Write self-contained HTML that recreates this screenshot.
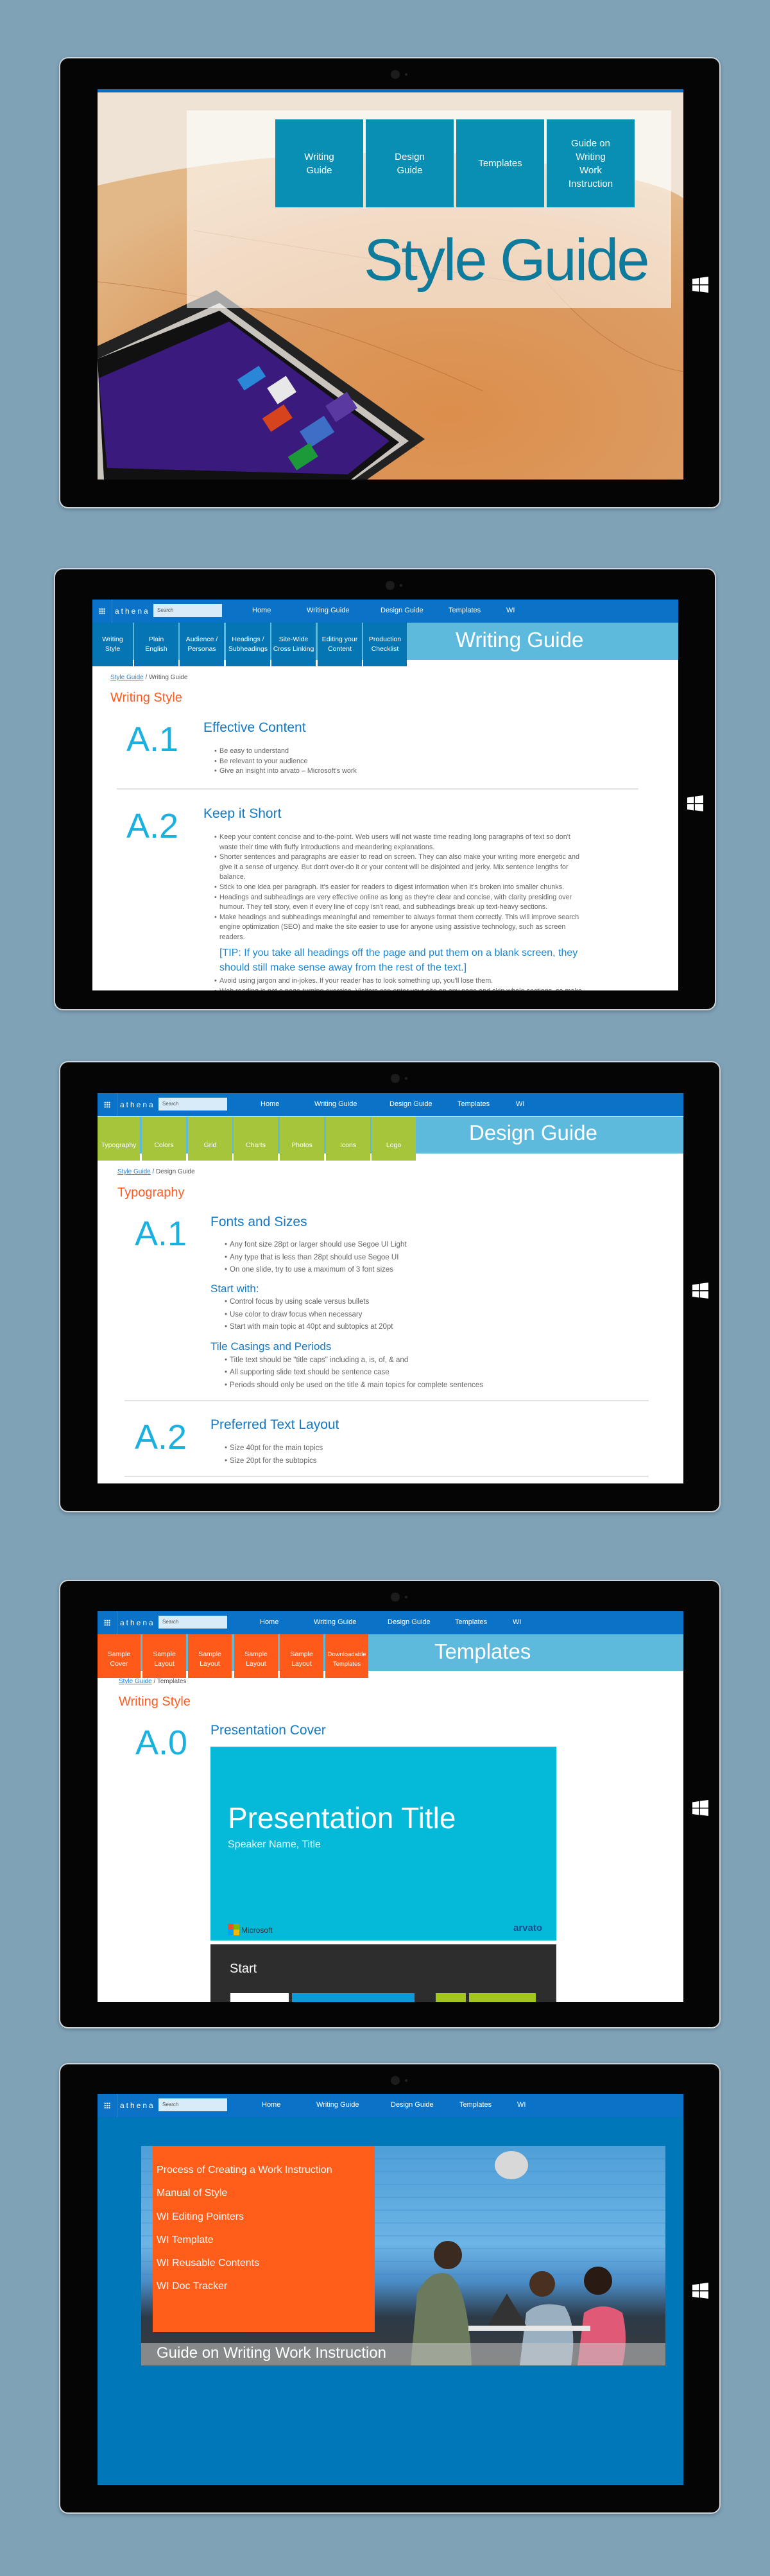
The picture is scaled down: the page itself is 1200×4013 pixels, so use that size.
<!DOCTYPE html>
<html><head><meta charset="utf-8">
<style>
*{margin:0;padding:0;box-sizing:border-box}
body{width:1200px;height:4013px;background:#7fa2b7;position:relative;overflow:hidden;font-family:"Liberation Sans",sans-serif}
.bz{position:absolute;background:#050505;border:2px solid #cfd4d8;border-radius:14px;box-shadow:0 2px 6px rgba(0,0,0,.25)}
.cam{position:absolute;left:515px;top:18px;width:14px;height:14px;border-radius:50%;background:#1c1c1c}
.cam2{position:absolute;left:537px;top:23px;width:4px;height:4px;border-radius:50%;background:#222}
.win{position:absolute;width:25px;height:25px}
.scr{position:absolute;overflow:hidden;background:#fff}
.a{position:absolute;white-space:nowrap}
.nav{position:absolute;left:0;top:0;width:913px;height:36px;background:#0a73c8;color:#fff;font-size:11px}
.nav .g{position:absolute;left:10px;top:13px;width:10px;height:10px;background:
 radial-gradient(circle,#fff 1px,transparent 1.3px) 0 0/3.4px 3.4px}
.nav .sep{position:absolute;left:30px;top:0;width:1px;height:36px;background:#2a8ad6}
.nav .ath{position:absolute;left:35px;top:11px;letter-spacing:3px;font-size:12px}
.nav .sr{position:absolute;left:95px;top:7px;width:107px;height:20px;background:#d7ebf8;color:#555;font-size:8px;padding:5px 6px}
.nav span.i{position:absolute;top:11px}
.tile{position:absolute;color:#fff;font-size:10.5px;text-align:center;line-height:15px;display:flex;align-items:center;justify-content:center}
.h{position:absolute;color:#fff;font-size:33px;white-space:nowrap}
.bc{position:absolute;font-size:10px;color:#555}
.bc u{color:#2a7fd0}
.or{position:absolute;color:#ff5a1f;font-size:20px}
.num{position:absolute;color:#1ab0e0;font-size:54px;line-height:54px}
.st{position:absolute;color:#1278c4;font-size:21px;line-height:24px;white-space:nowrap}
.ul{position:absolute;color:#666;font-size:10.8px;list-style:none}
.ul li{white-space:nowrap;position:relative;padding-left:8px}
.ul li:before{content:"•";position:absolute;left:0}
.hr{position:absolute;height:2px;background:#e2e2e2}
</style></head><body>

<!-- ===== TABLET 1 ===== -->
<div class="bz" style="left:92px;top:89px;width:1031px;height:703px">
 <div class="cam"></div><div class="cam2"></div>
 <div class="scr" style="left:58px;top:48px;width:913px;height:608px;background:#d79a62">
  <svg width="913" height="608" style="position:absolute;left:0;top:0">
   <defs>
    <radialGradient id="wd" cx="0.6" cy="0.8" r="0.8">
     <stop offset="0" stop-color="#dc8e4c"/><stop offset="0.6" stop-color="#dc9c62"/><stop offset="1" stop-color="#e2b888"/>
    </radialGradient>
   </defs>
   <rect width="913" height="608" fill="#eee3d5"/>
   <path d="M0 150 Q250 90 560 100 Q860 130 913 170 L913 608 L0 608Z" fill="url(#wd)"/>
   <g stroke="#a8602c" stroke-width="1" fill="none" opacity=".5">
    <path d="M0 300 Q300 330 600 470"/><path d="M0 410 Q250 420 500 560"/><path d="M700 300 Q800 420 913 440"/><path d="M150 220 Q400 260 650 300"/>
   </g>
   <polygon points="185,313 510,545 420,608 0,608 0,400" fill="#222"/>
   <polygon points="190,333 485,548 400,608 0,608 0,420" fill="#c9c4bd"/>
   <polygon points="190,345 470,550 395,608 10,608 0,420" fill="#111"/>
   <polygon points="205,362 455,548 390,600 15,590 2,450" fill="#3a1a7c"/>
   <rect x="220" y="440" width="40" height="20" fill="#2a86d6" transform="rotate(-33 240 450)"/>
   <rect x="270" y="455" width="35" height="30" fill="#e8e8e8" transform="rotate(-33 285 470)"/>
   <rect x="260" y="500" width="40" height="25" fill="#d5441c" transform="rotate(-33 280 512)"/>
   <rect x="320" y="520" width="45" height="30" fill="#3e6fc7" transform="rotate(-33 340 535)"/>
   <rect x="300" y="560" width="40" height="25" fill="#1c9a3a" transform="rotate(-33 320 572)"/>
   <rect x="360" y="480" width="40" height="30" fill="#5a3aa0" transform="rotate(-33 380 495)"/>
  </svg>
  <div style="position:absolute;left:0;top:0;width:913px;height:5px;background:#0a6fc2"></div>
  <div style="position:absolute;left:139px;top:33px;width:755px;height:308px;background:rgba(255,255,255,.6)"></div>
  <div class="tile" style="left:277px;top:47px;width:137px;height:137px;background:#0a8fb4;font-size:15px;line-height:21px">Writing<br>Guide</div>
  <div class="tile" style="left:418px;top:47px;width:137px;height:137px;background:#0a8fb4;font-size:15px;line-height:21px">Design<br>Guide</div>
  <div class="tile" style="left:559px;top:47px;width:137px;height:137px;background:#0a8fb4;font-size:15px;line-height:21px">Templates</div>
  <div class="tile" style="left:700px;top:47px;width:137px;height:137px;background:#0a8fb4;font-size:15px;line-height:21px">Guide on<br>Writing<br>Work<br>Instruction</div>
  <div class="a" style="left:415px;top:214px;font-size:92px;color:#0e7a9c;letter-spacing:-3px">Style Guide</div>
 </div>
 <svg class="win" style="left:985px;top:340px" viewBox="0 0 25 25"><path d="M0 3.5L10.5 2V12H0ZM12 1.8L25 0V12H12ZM0 13.5H10.5V23.5L0 22ZM12 13.5H25V25L12 23.2Z" fill="#fff"/></svg>
</div>

<!-- ===== TABLET 2 ===== -->
<div class="bz" style="left:84px;top:885px;width:1032px;height:689px">
 <div class="cam"></div><div class="cam2"></div>
 <svg class="win" style="left:985px;top:352px" viewBox="0 0 25 25"><path d="M0 3.5L10.5 2V12H0ZM12 1.8L25 0V12H12ZM0 13.5H10.5V23.5L0 22ZM12 13.5H25V25L12 23.2Z" fill="#fff"/></svg>
 <div class="scr" style="left:58px;top:47px;width:913px;height:609px">
  <div class="nav"><div class="g"></div><div class="sep"></div><div class="ath">athena</div><div class="sr">Search</div>
   <span class="i" style="left:249px">Home</span><span class="i" style="left:334px">Writing Guide</span><span class="i" style="left:449px">Design Guide</span><span class="i" style="left:555px">Templates</span><span class="i" style="left:645px">WI</span></div>
  <div style="position:absolute;left:0;top:36px;width:913px;height:58px;background:#5dbadd"></div>
  <div class="tile" style="left:0;top:36px;width:63px;height:68px;background:#0575b4">Writing<br>Style</div>
  <div class="tile" style="left:65px;top:36px;width:69px;height:68px;background:#0575b4">Plain<br>English</div>
  <div class="tile" style="left:136px;top:36px;width:69px;height:68px;background:#0575b4">Audience /<br>Personas</div>
  <div class="tile" style="left:208px;top:36px;width:69px;height:68px;background:#0575b4">Headings /<br>Subheadings</div>
  <div class="tile" style="left:279px;top:36px;width:69px;height:68px;background:#0575b4">Site-Wide<br>Cross Linking</div>
  <div class="tile" style="left:351px;top:36px;width:69px;height:68px;background:#0575b4">Editing your<br>Content</div>
  <div class="tile" style="left:422px;top:36px;width:68px;height:68px;background:#0575b4">Production<br>Checklist</div>
  <div class="h" style="left:566px;top:44px">Writing Guide</div>
  <div class="bc" style="left:28px;top:116px"><u>Style Guide</u> / Writing Guide</div>
  <div class="or" style="left:28px;top:142px">Writing Style</div>
  <div class="num" style="left:53px;top:191px">A.1</div>
  <div class="st" style="left:173px;top:188px">Effective Content</div>
  <ul class="ul" style="left:190px;top:229px;line-height:15.6px"><li>Be easy to understand</li><li>Be relevant to your audience</li><li>Give an insight into arvato – Microsoft's work</li></ul>
  <div class="hr" style="left:38px;top:294px;width:813px"></div>
  <div class="num" style="left:53px;top:326px">A.2</div>
  <div class="st" style="left:173px;top:322px">Keep it Short</div>
  <ul class="ul" style="left:190px;top:363px;line-height:15.6px">
   <li>Keep your content concise and to-the-point. Web users will not waste time reading long paragraphs of text so don't<br>waste their time with fluffy introductions and meandering explanations.</li>
   <li>Shorter sentences and paragraphs are easier to read on screen. They can also make your writing more energetic and<br>give it a sense of urgency. But don't over-do it or your content will be disjointed and jerky. Mix sentence lengths for<br>balance.</li>
   <li>Stick to one idea per paragraph. It's easier for readers to digest information when it's broken into smaller chunks.</li>
   <li>Headings and subheadings are very effective online as long as they're clear and concise, with clarity presiding over<br>humour. They tell story, even if every line of copy isn't read, and subheadings break up text-heavy sections.</li>
   <li>Make headings and subheadings meaningful and remember to always format them correctly. This will improve search<br>engine optimization (SEO) and make the site easier to use for anyone using assistive technology, such as screen<br>readers.</li>
  </ul>
  <div class="a" style="left:198px;top:539px;color:#1a86d4;font-size:16px;line-height:23px">[TIP: If you take all headings off the page and put them on a blank screen, they<br>should still make sense away from the rest of the text.]</div>
  <ul class="ul" style="left:190px;top:587px;line-height:15.6px"><li>Avoid using jargon and in-jokes. If your reader has to look something up, you'll lose them.</li><li>Web reading is not a page-turning exercise. Visitors can enter your site on any page and skip whole sections, so make</li></ul>
 </div>
</div>

<!-- ===== TABLET 3 ===== -->
<div class="bz" style="left:92px;top:1653px;width:1031px;height:703px">
 <div class="cam"></div><div class="cam2"></div>
 <svg class="win" style="left:985px;top:343px" viewBox="0 0 25 25"><path d="M0 3.5L10.5 2V12H0ZM12 1.8L25 0V12H12ZM0 13.5H10.5V23.5L0 22ZM12 13.5H25V25L12 23.2Z" fill="#fff"/></svg>
 <div class="scr" style="left:58px;top:48px;width:913px;height:608px">
  <div class="nav"><div class="g"></div><div class="sep"></div><div class="ath">athena</div><div class="sr">Search</div>
   <span class="i" style="left:254px">Home</span><span class="i" style="left:338px">Writing Guide</span><span class="i" style="left:455px">Design Guide</span><span class="i" style="left:561px">Templates</span><span class="i" style="left:652px">WI</span></div>
  <div style="position:absolute;left:0;top:37px;width:913px;height:57px;background:#5dbadd"></div>
  <div class="tile" style="left:0;top:37px;width:66px;height:68px;background:#a5c63b;align-items:flex-end;padding-bottom:16px">Typography</div>
  <div class="tile" style="left:69px;top:37px;width:69px;height:68px;background:#a5c63b;align-items:flex-end;padding-bottom:16px">Colors</div>
  <div class="tile" style="left:141px;top:37px;width:69px;height:68px;background:#a5c63b;align-items:flex-end;padding-bottom:16px">Grid</div>
  <div class="tile" style="left:212px;top:37px;width:69px;height:68px;background:#a5c63b;align-items:flex-end;padding-bottom:16px">Charts</div>
  <div class="tile" style="left:284px;top:37px;width:69px;height:68px;background:#a5c63b;align-items:flex-end;padding-bottom:16px">Photos</div>
  <div class="tile" style="left:356px;top:37px;width:69px;height:68px;background:#a5c63b;align-items:flex-end;padding-bottom:16px">Icons</div>
  <div class="tile" style="left:427px;top:37px;width:69px;height:68px;background:#a5c63b;align-items:flex-end;padding-bottom:16px">Logo</div>
  <div class="h" style="left:579px;top:43px">Design Guide</div>
  <div class="bc" style="left:31px;top:117px"><u>Style Guide</u> / Design Guide</div>
  <div class="or" style="left:31px;top:144px">Typography</div>
  <div class="num" style="left:58px;top:192px">A.1</div>
  <div class="st" style="left:176px;top:189px">Fonts and Sizes</div>
  <ul class="ul" style="left:198px;top:227px;line-height:19.7px;font-size:11.5px"><li>Any font size 28pt or larger should use Segoe UI Light</li><li>Any type that is less than 28pt should use Segoe UI</li><li>On one slide, try to use a maximum of 3 font sizes</li></ul>
  <div class="st" style="left:176px;top:293px;font-size:17px">Start with:</div>
  <ul class="ul" style="left:198px;top:316px;line-height:19.7px;font-size:11.5px"><li>Control focus by using scale versus bullets</li><li>Use color to draw focus when necessary</li><li>Start with main topic at 40pt and subtopics at 20pt</li></ul>
  <div class="st" style="left:176px;top:383px;font-size:17px">Tile Casings and Periods</div>
  <ul class="ul" style="left:198px;top:407px;line-height:19.3px;font-size:11.5px"><li>Title text should be "title caps" including a, is, of, &amp; and</li><li>All supporting slide text should be sentence case</li><li>Periods should only be used on the title &amp; main topics for complete sentences</li></ul>
  <div class="hr" style="left:42px;top:478px;width:817px"></div>
  <div class="num" style="left:58px;top:509px">A.2</div>
  <div class="st" style="left:176px;top:505px">Preferred Text Layout</div>
  <ul class="ul" style="left:198px;top:544px;line-height:19.5px;font-size:11.5px"><li>Size 40pt for the main topics</li><li>Size 20pt for the subtopics</li></ul>
  <div class="hr" style="left:42px;top:596px;width:817px"></div>
 </div>
</div>

<!-- ===== TABLET 4 ===== -->
<div class="bz" style="left:92px;top:2461px;width:1031px;height:699px">
 <div class="cam"></div><div class="cam2"></div>
 <svg class="win" style="left:985px;top:341px" viewBox="0 0 25 25"><path d="M0 3.5L10.5 2V12H0ZM12 1.8L25 0V12H12ZM0 13.5H10.5V23.5L0 22ZM12 13.5H25V25L12 23.2Z" fill="#fff"/></svg>
 <div class="scr" style="left:58px;top:47px;width:913px;height:609px">
  <div class="nav"><div class="g"></div><div class="sep"></div><div class="ath">athena</div><div class="sr">Search</div>
   <span class="i" style="left:253px">Home</span><span class="i" style="left:337px">Writing Guide</span><span class="i" style="left:452px">Design Guide</span><span class="i" style="left:557px">Templates</span><span class="i" style="left:647px">WI</span></div>
  <div style="position:absolute;left:0;top:36px;width:913px;height:57px;background:#5dbadd"></div>
  <div class="tile" style="left:0;top:36px;width:67px;height:68px;background:#ff5a1a;padding-top:10px">Sample<br>Cover</div>
  <div class="tile" style="left:70px;top:36px;width:68px;height:68px;background:#ff5a1a;padding-top:10px">Sample<br>Layout</div>
  <div class="tile" style="left:141px;top:36px;width:68px;height:68px;background:#ff5a1a;padding-top:10px">Sample<br>Layout</div>
  <div class="tile" style="left:213px;top:36px;width:68px;height:68px;background:#ff5a1a;padding-top:10px">Sample<br>Layout</div>
  <div class="tile" style="left:284px;top:36px;width:68px;height:68px;background:#ff5a1a;padding-top:10px">Sample<br>Layout</div>
  <div class="tile" style="left:355px;top:36px;width:67px;height:68px;background:#ff5a1a;padding-top:10px;font-size:9.5px">Downloadable<br>Templates</div>
  <div class="h" style="left:525px;top:44px">Templates</div>
  <div class="bc" style="left:33px;top:104px"><u>Style Guide</u> / Templates</div>
  <div class="or" style="left:33px;top:130px">Writing Style</div>
  <div class="num" style="left:59px;top:178px">A.0</div>
  <div class="st" style="left:176px;top:174px">Presentation Cover</div>
  <div style="position:absolute;left:176px;top:211px;width:539px;height:302px;background:#05bad9">
   <div class="a" style="left:27px;top:84px;color:#fff;font-size:46px">Presentation Title</div>
   <div class="a" style="left:27px;top:144px;color:#e8f8fc;font-size:16px">Speaker Name, Title</div>
   <div style="position:absolute;left:27px;top:276px;width:18px;height:18px;background:linear-gradient(90deg,#f25022 50%,#7fba00 50%) top/100% 50% no-repeat,linear-gradient(90deg,#00a4ef 50%,#ffb900 50%) bottom/100% 50% no-repeat"></div>
   <div class="a" style="left:48px;top:279px;color:#333;font-size:12px">Microsoft</div>
   <div class="a" style="left:472px;top:274px;color:#1a4d8c;font-size:15px;font-weight:bold">arvato</div>
  </div>
  <div style="position:absolute;left:176px;top:519px;width:539px;height:100px;background:#2d2d2d">
   <div class="a" style="left:30px;top:27px;color:#fff;font-size:20px">Start</div>
   <div style="position:absolute;left:31px;top:76px;width:91px;height:30px;background:#fff"></div>
   <div style="position:absolute;left:127px;top:76px;width:191px;height:30px;background:#0b9ad8"></div>
   <div style="position:absolute;left:351px;top:76px;width:47px;height:30px;background:#a3c61c"></div>
   <div style="position:absolute;left:403px;top:76px;width:104px;height:30px;background:#a3c61c"></div>
  </div>
 </div>
</div>

<!-- ===== TABLET 5 ===== -->
<div class="bz" style="left:92px;top:3214px;width:1031px;height:702px">
 <div class="cam"></div><div class="cam2"></div>
 <svg class="win" style="left:985px;top:340px" viewBox="0 0 25 25"><path d="M0 3.5L10.5 2V12H0ZM12 1.8L25 0V12H12ZM0 13.5H10.5V23.5L0 22ZM12 13.5H25V25L12 23.2Z" fill="#fff"/></svg>
 <div class="scr" style="left:58px;top:46px;width:913px;height:609px;background:#0077b9">
  <div class="nav"><div class="g"></div><div class="sep"></div><div class="ath">athena</div><div class="sr">Search</div>
   <span class="i" style="left:256px">Home</span><span class="i" style="left:341px">Writing Guide</span><span class="i" style="left:457px">Design Guide</span><span class="i" style="left:564px">Templates</span><span class="i" style="left:654px">WI</span></div>
  <div style="position:absolute;left:68px;top:81px;width:817px;height:342px;overflow:hidden;background:linear-gradient(180deg,#4f9fd8 0%,#6cb4e6 45%,#4a8cc6 62%,#2c3a48 78%,#3a3a3a 100%)">
   <svg width="817" height="342" style="position:absolute;left:0;top:0">
    <g stroke="#3a86c4" stroke-width="1" opacity=".5">
     <path d="M0 20H817M0 40H817M0 60H817M0 80H817M0 100H817M0 120H817M0 140H817M0 160H817M0 180H817M0 200H817"/>
    </g>
    <ellipse cx="577" cy="30" rx="26" ry="22" fill="#d8d8d8"/>
    <path d="M420 342 L430 230 Q450 190 480 200 Q510 220 515 342Z" fill="#6b7a5c"/>
    <circle cx="478" cy="170" r="22" fill="#3a2a20"/>
    <path d="M590 342 L600 260 Q620 240 660 250 Q680 280 670 342Z" fill="#9ab0c0"/>
    <circle cx="625" cy="215" r="20" fill="#4a3020"/>
    <path d="M680 342 L690 260 Q720 240 750 260 Q760 300 750 342Z" fill="#e05a78"/>
    <circle cx="712" cy="210" r="22" fill="#2a1a14"/>
    <rect x="510" y="280" width="190" height="8" fill="#e8e8e8"/>
    <polygon points="540,280 570,230 600,280" fill="#333"/>
   </svg>
   <div style="position:absolute;left:18px;top:0;width:346px;height:290px;background:#ff5d1a"></div>
   <div class="a" style="left:24px;top:20px;color:#fff;font-size:16px;line-height:36.3px">Process of Creating a Work Instruction<br>Manual of Style<br>WI Editing Pointers<br>WI Template<br>WI Reusable Contents<br>WI Doc Tracker</div>
   <div style="position:absolute;left:0;top:307px;width:817px;height:35px;background:rgba(200,200,200,.55)"></div>
   <div class="a" style="left:24px;top:309px;color:#fff;font-size:24px">Guide on Writing Work Instruction</div>
  </div>
 </div>
</div>
</body></html>
